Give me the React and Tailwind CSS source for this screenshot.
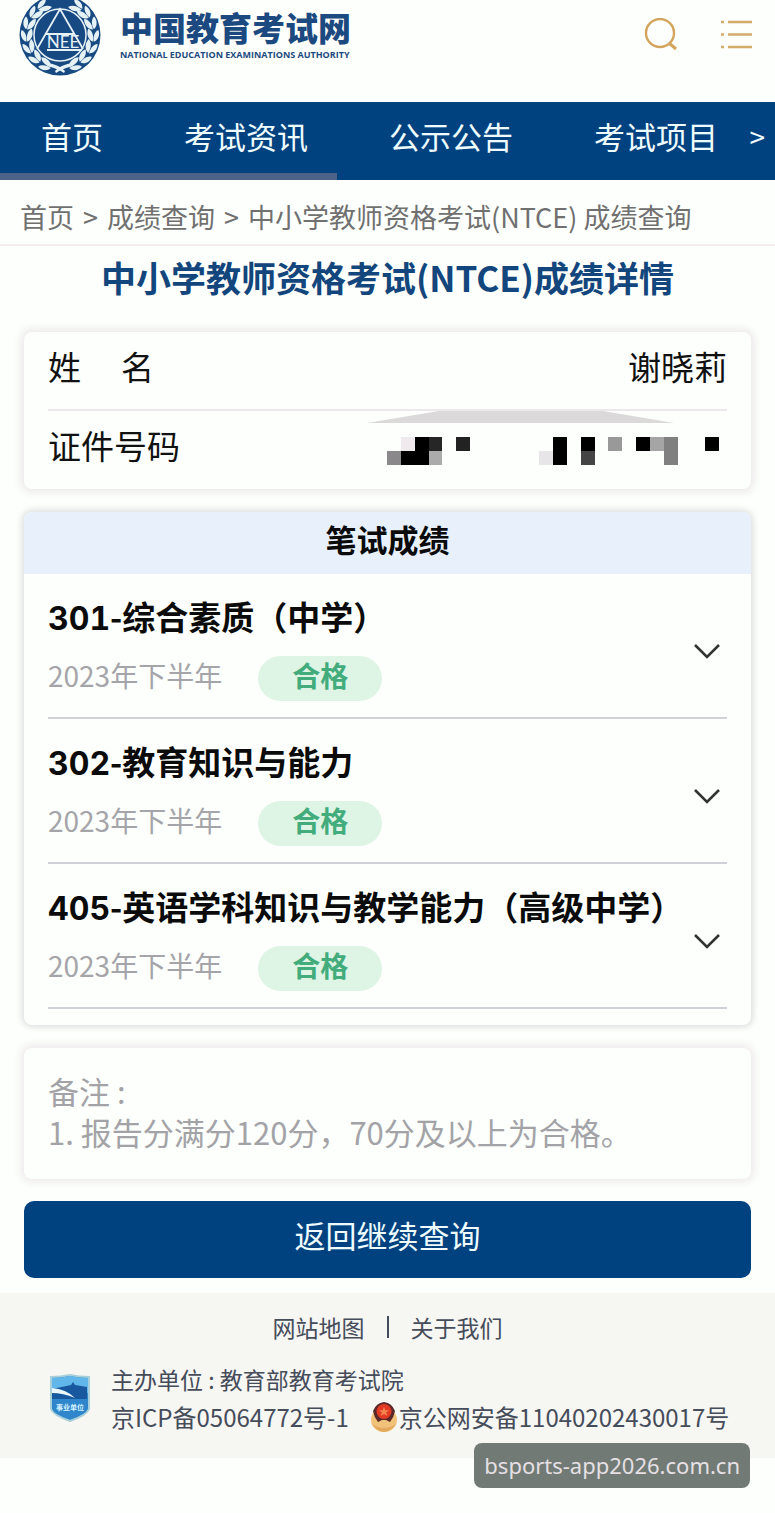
import React from 'react';

const navItems = ['首页', '考试资讯', '公示公告', '考试项目'];

const scores = [
  { code: '301', subject: '综合素质（中学）', term: '2023年下半年', result: '合格' },
  { code: '302', subject: '教育知识与能力', term: '2023年下半年', result: '合格' },
  { code: '405', subject: '英语学科知识与教学能力（高级中学）', term: '2023年下半年', result: '合格' },
];

// masked ID number: [column, row, rows high, colour]
const maskCells = [
  [0, 1, 1, '#8a888a'],
  [1, 0, 1, '#f0eaee'],
  [1, 1, 1, '#000000'],
  [2, 0, 2, '#000000'],
  [3, 0, 1, '#262626'],
  [3, 1, 1, '#ababab'],
  [5, 0, 1, '#222222'],
  [11, 1, 1, '#e8e5e8'],
  [12, 0, 2, '#000000'],
  [14, 0, 1, '#000000'],
  [14, 1, 1, '#444444'],
  [16, 0, 1, '#9a999a'],
  [18, 0, 1, '#000000'],
  [19, 0, 1, '#a6a5a6'],
  [20, 0, 2, '#808080'],
  [23, 0, 1, '#000000'],
];

const leafAngles = [24, 45, 66, 87, 108, 129, 148];

function Laurel() {
  return (
    <g fill="#e6f1f6">
      {leafAngles.map((angle) => (
        <g key={angle} transform={`rotate(${-angle}) translate(0 33)`}>
          <path d="M-5 0 C-3 -5 3 -7 8 -5 C6 -1 1 1 -5 0Z" />
          <path d="M-5 1 C-1 0 5 1 7 5 C3 7 -3 6 -5 1Z" />
        </g>
      ))}
      <path d="M-5 36 L-4 38 C2 34 8 32 13 31 L12 28 C6 29 0 31 -5 36Z" />
    </g>
  );
}

function Emblem() {
  return (
    <svg className="-mt-1.5 size-[82px] shrink-0" viewBox="-41 -41 82 82" aria-hidden="true">
      <circle r="40.5" fill="#174a82" />
      <g transform="scale(-1 1)">
        <Laurel />
      </g>
      <Laurel />
      <circle r="26" fill="#174a82" stroke="#e6f1f6" strokeWidth="1.5" />
      <path
        d="M-23 14 L0 -26 L23 14 M-14 -1 H14 M-13 15 H22"
        fill="none"
        stroke="#e6f1f6"
        strokeWidth="1.8"
      />
      <text x="3" y="13" textAnchor="middle" fontSize="17" fontFamily="Lato, sans-serif" fill="#e6f1f6">
        NEE
      </text>
    </svg>
  );
}

function Header() {
  return (
    <header className="flex h-[102px] items-start overflow-hidden pr-5 pl-[19px]">
      <a href="#home" className="flex items-start text-[#1c4a80]">
        <Emblem />
        <span className="ml-[19px] flex flex-col pt-1">
          <span className="text-[33px] leading-[46px] font-black">中国教育考试网</span>
          <span className="font-['Open_Sans','Liberation_Sans',sans-serif] text-[9px] leading-[10px] font-bold whitespace-nowrap">
            NATIONAL EDUCATION EXAMINATIONS AUTHORITY
          </span>
        </span>
      </a>
      <div className="ml-auto flex gap-10 pt-[18px]">
        <button type="button" aria-label="搜索">
          <svg className="size-9" viewBox="0 0 36 36" fill="none" stroke="#d3a45c" strokeWidth="2.4">
            <circle cx="17" cy="15" r="14" />
            <path d="M26 25 L33 31" strokeWidth="3" />
          </svg>
        </button>
        <button type="button" aria-label="菜单">
          <svg className="size-9" viewBox="0 0 36 36" fill="none" stroke="#d3ac6c" strokeWidth="2.4">
            <path d="M2 4 H5 M2 16.500 H5 M2 29 H5 M9 4 H33 M9 16.500 H33 M9 29 H33" />
          </svg>
        </button>
      </div>
    </header>
  );
}

function Nav() {
  return (
    <nav className="relative h-[78px] bg-[#00427f] text-[#eefcff]">
      <div className="flex items-center justify-between pt-[11px] pr-2.5 pl-[41px] text-[31px] leading-[46px]">
        <div className="flex gap-[81px] whitespace-nowrap">
          {navItems.map((item) => (
            <a key={item} href="#nav">
              {item}
            </a>
          ))}
        </div>
        <button type="button" aria-label="更多" className="text-[28px]">
          &gt;
        </button>
      </div>
      {/* horizontal scroll indicator */}
      <div className="absolute bottom-0 left-0 h-[7px] w-[337px] bg-[#4c6286]" />
    </nav>
  );
}

function ProfileCard() {
  return (
    <section className="mt-[30px] rounded-lg bg-[#fcfffb] px-6 text-[33px] text-[#111] shadow-[0_0_8px_3px_#ece7ea]">
      <dl>
        <div className="flex h-[79px] items-center justify-between border-b-2 border-[#ece8eb] pb-2">
          <dt className="flex gap-10">
            <span>姓</span>
            <span>名</span>
          </dt>
          <dd>谢晓莉</dd>
        </div>
        <div className="relative flex h-[78px] items-center justify-between pb-2">
          <svg className="absolute top-0 right-[53px] h-3 w-[307px]" viewBox="0 0 307 12" aria-hidden="true">
            <path d="M0 12 L72 0 H236 L307 12Z" fill="#dbd9da" />
          </svg>
          <dt>证件号码</dt>
          <dd className="pt-2.5 pr-2">
            <svg
              className="h-7 w-[332px]"
              viewBox="0 0 24 2"
              preserveAspectRatio="none"
              shapeRendering="crispEdges"
              role="img"
              aria-label="证件号码已隐藏"
            >
              {maskCells.map(([x, y, h, fill]) => (
                <rect key={`${x}-${y}`} x={x} y={y} width="1" height={h} fill={fill} />
              ))}
            </svg>
          </dd>
        </div>
      </dl>
    </section>
  );
}

function ScoreRow({ code, subject, term, result }) {
  return (
    <li className="flex h-[145px] items-center justify-between border-b-2 border-[#cfd1d6]">
      <div>
        <h3 className="text-[33px] leading-[50px] font-bold whitespace-nowrap text-[#0b0b0b]">
          <span className="font-['Inter','Noto_Sans_CJK_SC',sans-serif] text-[32px] tabular-nums">{code}</span>
          -{subject}
        </h3>
        <div className="mt-3 flex items-start gap-9">
          <span className="text-[28px] leading-[38px] text-[#a4a4a9]">{term}</span>
          <span className="h-[45px] w-[124px] rounded-full bg-[#def4e5] text-center text-[28px] leading-[38px] font-bold text-[#43ac7c]">
            {result}
          </span>
        </div>
      </div>
      <button type="button" aria-label={`展开 ${subject}`} className="-ml-10 pt-2.5 pr-1.5">
        <svg className="h-4 w-7" viewBox="0 0 28 16" fill="none" stroke="#333" strokeWidth="2.6">
          <path d="M2 2 L14 14 L26 2" />
        </svg>
      </button>
    </li>
  );
}

function ScoreCard() {
  return (
    <section className="mt-[23px] overflow-hidden rounded-lg bg-[#fcfffb] pb-4 shadow-[0_0_6px_2px_#dcdde0]">
      <h2 className="h-[62px] bg-[#e8f0fb] text-center text-[31px] leading-[54px] font-bold text-[#0b0b0b]">
        笔试成绩
      </h2>
      <ul className="px-6">
        {scores.map((score) => (
          <ScoreRow key={score.code} {...score} />
        ))}
      </ul>
    </section>
  );
}

function Footer() {
  return (
    <footer className="relative mt-[15px] h-[165px] bg-[#f6f6f2] pt-4 text-[23px] text-[#454c5a]">
      <div className="flex items-center justify-center gap-[22px] leading-9">
        <a href="#sitemap">网站地图</a>
        <span className="h-[22px] w-0.5 bg-[#454c5a]" />
        <a href="#about">关于我们</a>
      </div>
      <div className="mt-4 flex items-center pl-[49px] leading-[37px]">
        <svg className="h-[50px] w-[42px] shrink-0" viewBox="0 0 42 50" aria-hidden="true">
          <path
            d="M2 4 Q12 4 21 2 Q30 4 40 4 V36 Q38 42 21 48 Q4 42 2 36Z"
            fill="#2f86cb"
            stroke="#a9cfd8"
            strokeWidth="2"
          />
          <path d="M3 5 Q13 5 21 3 Q30 5 39 5 V20 H3Z" fill="#62b7ea" />
          <path d="M3 16 L22 12 L24 9 L26 12 L38 14 V26 H3Z" fill="#17589f" />
          <path d="M3 15 Q17 16 26 25 Q14 20 3 20Z" fill="#eaf7ff" />
          <text
            x="21"
            y="37"
            textAnchor="middle"
            fontSize="7"
            fontWeight="bold"
            fontFamily="'Noto Sans CJK SC', sans-serif"
            fill="#d5f2ff"
          >
            事业单位
          </text>
        </svg>
        <div className="ml-5 whitespace-nowrap">
          <p>主办单位 : 教育部教育考试院</p>
          <p className="flex items-center text-[24px]">
            <a href="#icp">京ICP备05064772号-1</a>
            <svg className="ml-5 size-[30px] shrink-0" viewBox="0 0 30 30" aria-hidden="true">
              <ellipse cx="15" cy="18" rx="13" ry="12" fill="#f0c27a" />
              <path d="M3 22 Q9 30 15 30 Q21 30 27 22 Q21 26 15 26 Q9 26 3 22Z" fill="#e3a95c" />
              <path d="M15 0 Q23 1 26 9 Q25 15 21 20 L17 18 H13 L9 20 Q5 15 4 9 Q7 1 15 0Z" fill="#5a2826" />
              <circle cx="15" cy="9.500" r="7.500" fill="#e23a25" />
              <path
                d="M15 5 L16.300 8.300 H20 L17.200 10.500 L18.200 14 L15 12 L11.800 14 L12.800 10.500 L10 8.300 H13.700Z"
                fill="#f5854c"
              />
            </svg>
            <a href="#beian">京公网安备11040202430017号</a>
          </p>
        </div>
      </div>
      <div className="absolute right-[25px] -bottom-[30px] rounded-lg bg-[#717a75] px-2.5 font-['Noto_Sans',sans-serif] text-[22px] leading-[45px] text-[#e6e0e4]">
        bsports-app2026.com.cn
      </div>
    </footer>
  );
}

function App() {
  return (
    <div className="min-h-screen bg-[#fcfffb] font-['Noto_Sans_CJK_SC',sans-serif]">
      <Header />
      <Nav />
      <div className="flex gap-[9px] border-b-2 border-[#f5edf0] px-5 pt-[18px] pb-2 text-[27px] leading-[38px] whitespace-nowrap text-[#707070]">
        <a href="#home">首页</a>
        <span>&gt;</span>
        <a href="#scores">成绩查询</a>
        <span>&gt;</span>
        <span>中小学教师资格考试(NTCE) 成绩查询</span>
      </div>
      <main className="px-6">
        <h1 className="pt-1.5 text-center text-[35px] leading-[50px] font-bold whitespace-nowrap text-[#12467c]">
          中小学教师资格考试(NTCE)成绩详情
        </h1>
        <ProfileCard />
        <ScoreCard />
        <section className="mt-[23px] rounded-lg bg-[#fcfffb] px-6 pt-[22px] pb-[27px] text-[31px] leading-[41px] text-[#a3a3a7] shadow-[0_0_8px_3px_#efe9ec]">
          <p>备注 :</p>
          <p>1. 报告分满分120分，70分及以上为合格。</p>
        </section>
        <button
          type="button"
          className="mt-[22px] h-[77px] w-full rounded-[10px] bg-[#00427f] pb-2 text-[31px] text-[#eefcff]"
        >
          返回继续查询
        </button>
      </main>
      <Footer />
    </div>
  );
}

export default App;
